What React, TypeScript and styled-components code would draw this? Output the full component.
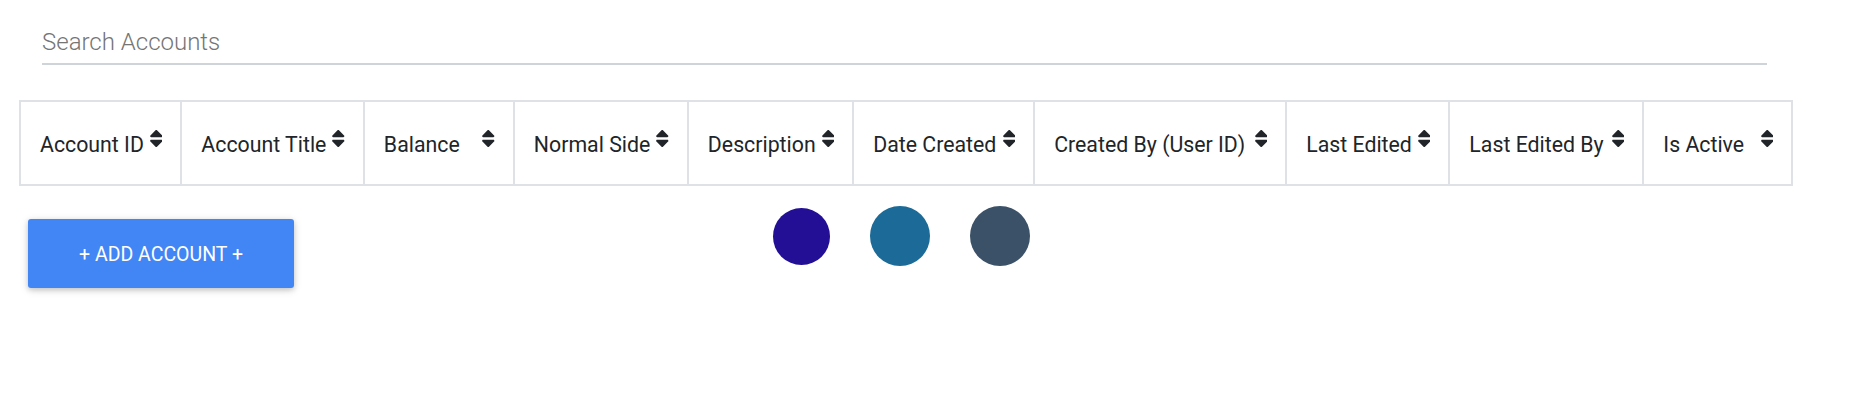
import styled, { createGlobalStyle } from 'styled-components';

const GlobalStyle = createGlobalStyle`
  html, body {
    margin: 0;
    padding: 0;
    background: #ffffff;
    font-family: Roboto, "Noto Sans", "Liberation Sans", sans-serif;
  }
  * {
    box-sizing: border-box;
  }
`;

// column titles and their widths (px, border included)
const columns: { title: string; width: number }[] = [
  { title: 'Account ID', width: 161 },
  { title: 'Account Title', width: 182 },
  { title: 'Balance', width: 150 },
  { title: 'Normal Side', width: 174 },
  { title: 'Description', width: 165 },
  { title: 'Date Created', width: 181 },
  { title: 'Created By (User ID)', width: 252 },
  { title: 'Last Edited', width: 161 },
  { title: 'Last Edited By', width: 194 },
  { title: 'Is Active', width: 149 },
];

const dots = [
  { color: '#230f95', size: 57 },
  { color: '#1c6a97', size: 60 },
  { color: '#3b5168', size: 60 },
];

const SortIcon = () => (
  <SortSvg viewBox="17 57 286 398" aria-hidden="true">
    <path d="M41 288h238c21.4 0 32.1 25.9 17 41L177 448c-9.4 9.4-24.6 9.4-33.9 0L24 329c-15.1-15.1-4.4-41 17-41zm255-105L177 64c-9.4-9.4-24.6-9.4-33.9 0L24 183c-15.1 15.1-4.4 41 17 41h238c21.4 0 32.1-25.9 17-41z" />
  </SortSvg>
);

const App = () => {
  return (
    <Page>
      <GlobalStyle />
      <SearchBar>
        <SearchInput type="text" placeholder="Search Accounts" />
      </SearchBar>

      <Table>
        <thead>
          <tr>
            {columns.map((col) => (
              <HeadCell key={col.title} $w={col.width}>
                <HeadInner>
                  <span>{col.title}</span>
                  <SortIcon />
                </HeadInner>
              </HeadCell>
            ))}
          </tr>
        </thead>
      </Table>

      <Actions>
        <AddButton type="button">+ Add Account +</AddButton>
        <Loader>
          {dots.map((d) => (
            <Dot key={d.color} $color={d.color} $size={d.size} />
          ))}
        </Loader>
      </Actions>
    </Page>
  );
};

// Styled Components
const Page = styled.div`
  width: 1864px;
  min-height: 409px;
  background: #ffffff;
`;

const SearchBar = styled.div`
  padding: 23px 97px 0 42px;
`;

const SearchInput = styled.input`
  display: block;
  width: 100%;
  height: 42px;
  padding: 0 0 2px 0;
  border: none;
  border-bottom: 2px solid #ced4da;
  outline: none;
  background: transparent;
  font-family: Roboto, "Liberation Sans", sans-serif;
  font-weight: 300;
  font-size: 24px;
  color: #495057;

  &::placeholder {
    color: #757575;
    opacity: 1;
  }
`;

const Table = styled.table`
  margin: 35px 0 0 19px;
  border-collapse: separate;
  border-spacing: 0;
  table-layout: fixed;
`;

const HeadCell = styled.th<{ $w: number }>`
  width: ${(p) => p.$w}px;
  height: 86px;
  padding: 0 18px 0 19px;
  border-top: 2px solid #dee2e6;
  border-bottom: 2px solid #dee2e6;
  border-right: 2px solid #dee2e6;
  font-family: Roboto, "Liberation Sans", sans-serif;
  font-weight: 400;
  font-size: 21.3px;
  color: #212529;
  text-align: left;
  white-space: nowrap;
  vertical-align: middle;

  &:first-child {
    border-left: 2px solid #dee2e6;
  }
`;

const HeadInner = styled.div`
  display: flex;
  align-items: center;
  justify-content: space-between;
  gap: 6px;
  padding-top: 2px;
`;

const SortSvg = styled.svg`
  flex: none;
  width: 12.5px;
  height: 17px;
  margin-bottom: 11px;
  fill: #212529;
`;

const Actions = styled.div`
  display: flex;
  align-items: flex-start;
`;

const AddButton = styled.button`
  margin: 33px 0 0 28px;
  width: 266px;
  height: 69px;
  display: flex;
  align-items: center;
  justify-content: center;
  padding: 2px 0 0;
  border: none;
  border-radius: 3px;
  background: #4285f4;
  color: #ffffff;
  font-family: Roboto, "Liberation Sans", sans-serif;
  font-weight: 400;
  font-size: 19.5px;
  text-transform: uppercase;
  box-shadow: 0 2px 5px 0 rgba(0, 0, 0, 0.16), 0 2px 10px 0 rgba(0, 0, 0, 0.12);
  cursor: pointer;
`;

const Loader = styled.div`
  display: flex;
  align-items: center;
  gap: 40px;
  margin: 20px 0 0 479px;
  height: 60px;
`;

const Dot = styled.div<{ $color: string; $size: number }>`
  width: ${(p) => p.$size}px;
  height: ${(p) => p.$size}px;
  border-radius: 50%;
  background: ${(p) => p.$color};
`;

export default App;
